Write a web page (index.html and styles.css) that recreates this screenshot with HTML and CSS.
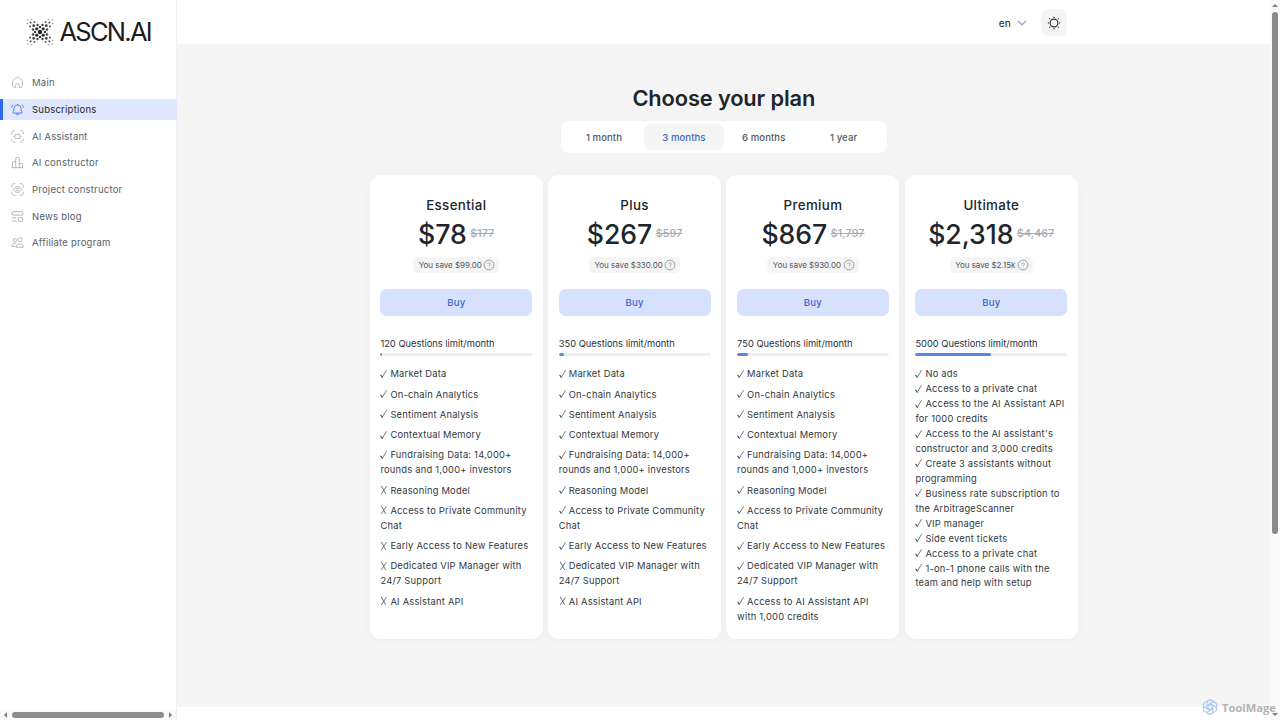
FILE: index.html
```html
<!DOCTYPE html>
<html lang="en">
<head>
<meta charset="utf-8">
<title>ASCN.AI – Subscriptions</title>
<link rel="stylesheet" href="styles.css">
</head>
<body>
<svg class="defs" width="0" height="0" aria-hidden="true">
  <symbol id="ok" viewBox="0 0 8 10"><path d="M.7 6 2.200 8.500 6.600 1.200" fill="none" stroke="#4a525a" stroke-width=".75"/><path d="M.7 5.800 2.300 8.400" stroke="#404850" stroke-width="1"/></symbol>
  <symbol id="no" viewBox="0 0 8 10"><path d="M1.700 1.400 5.600 8.900M6.500 1.200 1.300 8.900M1 1.600h1" fill="none" stroke="#4a525a" stroke-width=".8"/></symbol>
  <symbol id="help" viewBox="0 0 12 12"><circle cx="6" cy="6" r="4.900" fill="none" stroke="#929aa3" stroke-width=".9"/><path d="M4.700 5.100c0-1.800 2.700-1.700 2.700-.1 0 1-1.300 1-1.300 2M6.100 7.800v.7" fill="none" stroke="#929aa3" stroke-width=".8"/></symbol>
</svg>
<div class="app">
  <aside class="sidebar">
    <div class="logo">
      <svg class="logo-mark" viewBox="0 0 28 28" fill="#222">
        <circle cx="14" cy="14" r="2.200"/>
        <g fill="#333"><circle cx="10.800" cy="10.800" r="1.600"/><circle cx="17.200" cy="10.800" r="1.600"/><circle cx="10.800" cy="17.200" r="1.600"/><circle cx="17.200" cy="17.200" r="1.600"/><circle cx="14" cy="9" r="1.200"/><circle cx="14" cy="19" r="1.200"/><circle cx="9" cy="14" r="1.200"/><circle cx="19" cy="14" r="1.200"/></g>
        <g fill="#444"><circle cx="7.700" cy="7.700" r="1.400"/><circle cx="20.300" cy="7.700" r="1.400"/><circle cx="7.700" cy="20.300" r="1.400"/><circle cx="20.300" cy="20.300" r="1.400"/><circle cx="7" cy="11.500" r="1.200"/><circle cx="21" cy="11.500" r="1.200"/><circle cx="7" cy="16.500" r="1.200"/><circle cx="21" cy="16.500" r="1.200"/><circle cx="11.500" cy="7" r="1.200"/><circle cx="16.500" cy="7" r="1.200"/><circle cx="11.500" cy="21" r="1.200"/><circle cx="16.500" cy="21" r="1.200"/></g>
        <g fill="#666"><circle cx="4.600" cy="4.600" r="1.100"/><circle cx="23.400" cy="4.600" r="1.100"/><circle cx="4.600" cy="23.400" r="1.100"/><circle cx="23.400" cy="23.400" r="1.100"/><circle cx="4" cy="8.500" r="1"/><circle cx="24" cy="8.500" r="1"/><circle cx="4" cy="19.500" r="1"/><circle cx="24" cy="19.500" r="1"/><circle cx="8.500" cy="4" r="1"/><circle cx="19.500" cy="4" r="1"/><circle cx="8.500" cy="24" r="1"/><circle cx="19.500" cy="24" r="1"/></g>
        <g fill="#999"><circle cx="1.500" cy="1.800" r=".7"/><circle cx="26.500" cy="1.800" r=".7"/><circle cx="1.500" cy="26.200" r=".7"/><circle cx="26.500" cy="26.200" r=".7"/><circle cx="1.300" cy="5.500" r=".8"/><circle cx="26.700" cy="5.500" r=".8"/><circle cx="1.300" cy="22.500" r=".8"/><circle cx="26.700" cy="22.500" r=".8"/><circle cx="5.500" cy="1.300" r=".8"/><circle cx="22.500" cy="1.300" r=".8"/><circle cx="5.500" cy="26.700" r=".8"/><circle cx="22.500" cy="26.700" r=".8"/></g>
      </svg>
      <span class="logo-text">ASCN.AI</span>
    </div>
    <nav class="nav">
      <a class="nav-item"><svg class="nav-icon" viewBox="0 0 14 14"><path d="M1.700 6c0-.9.2-1.300.9-1.900L5.700 1.800c.9-.6 1.700-.6 2.600 0l3.100 2.300c.7.6.9 1 .9 1.900v4.200c0 1.400-.7 2.200-2.100 2.200H9V10c0-2.400-4-2.400-4 0v2.400H3.800c-1.400 0-2.100-.8-2.100-2.200z"/></svg><span>Main</span></a>
      <a class="nav-item active"><svg class="nav-icon" viewBox="0 0 14 14"><path d="M2.500 10.800h9c.6 0 .8-.6.400-1-.7-.8-1-1.300-1-2.300V5.800c0-4.800-7.800-4.800-7.800 0v1.700c0 1-.3 1.500-1 2.300-.4.400-.2 1 .4 1zM5.300 11c.2 2.300 3.200 2.300 3.400 0M7 2.200V.9M2.500 1.600C1.300 2.500.9 3.500.8 5M11.500 1.600c1.200.9 1.600 1.900 1.700 3.400"/></svg><span>Subscriptions</span></a>
      <a class="nav-item"><svg class="nav-icon" viewBox="0 0 14 14"><path d="M.7 4.700V3.500C.7 2 2 .7 3.500.7h1.200M9.300.7h1.200C12 .7 13.300 2 13.300 3.500v1.200M13.300 9.300v1.200c0 1.500-1.300 2.800-2.800 2.800H9.300M4.700 13.300H3.500C2 13.300.7 12 .7 10.500V9.300M5.600 4.900h2.800c1 0 1.600.6 1.600 1.600v1.100c0 1-.6 1.600-1.600 1.600H5.600C4.600 9.200 4 8.600 4 7.600V6.500c0-1 .6-1.600 1.600-1.600zM7 4.800V3.800M3.300 6.500v1.300M10.700 6.500v1.300"/></svg><span>AI Assistant</span></a>
      <a class="nav-item"><svg class="nav-icon" viewBox="0 0 14 14"><path d="M.8 12.600h12.400M1.600 12.600V7c0-.8.3-1.100 1-1.100h2.500M5.100 12.600V2.800c0-1 .4-1.400 1.200-1.400h1.400c.8 0 1.200.4 1.200 1.400v9.800M8.900 8h2.500c.7 0 1 .3 1 1.100v3.500"/></svg><span>AI constructor</span></a>
      <a class="nav-item"><svg class="nav-icon" viewBox="0 0 14 14"><path d="M.7 4.700V3.500C.7 2 2 .7 3.500.7h1.200M9.300.7h1.200C12 .7 13.300 2 13.300 3.500v1.200M13.300 9.300v1.200c0 1.500-1.300 2.800-2.800 2.800H9.300M4.700 13.300H3.500C2 13.300.7 12 .7 10.500V9.300M2.500 7c2.300-4.300 6.700-4.300 9 0-2.300 4.300-6.700 4.300-9 0z"/><circle cx="7" cy="7" r="1.600"/></svg><span>Project constructor</span></a>
      <a class="nav-item"><svg class="nav-icon" viewBox="0 0 14 14"><rect x="1.300" y="1.800" width="11.400" height="3.700" rx=".8"/><rect x="8" y="8.200" width="4.400" height="4" rx=".7"/><path d="M1.200 8.400H6M1.200 11.900H6"/></svg><span>News blog</span></a>
      <a class="nav-item"><svg class="nav-icon" viewBox="0 0 14 14"><circle cx="4.200" cy="4.500" r="1.800"/><circle cx="9.800" cy="4" r="2.200"/><path d="M5.800 12.100c-.4-4.900 7.900-4.900 7.500 0zM1 11.300c-.2-2 .8-3.100 2.500-3.200h1.700M1 11.300h3.600"/></svg><span>Affiliate program</span></a>
    </nav>
    <div class="hbar"><i class="tri-l"></i><i class="hthumb"></i><i class="tri-r"></i></div>
  </aside>
  <div class="page">
    <header class="header">
      <span class="lang">en</span>
      <svg class="chev" viewBox="0 0 10 6"><path d="M1 .9 5 4.900 9 .9" fill="none" stroke="#8f99a3" stroke-width="1.200"/></svg>
      <button class="theme"><svg viewBox="0 0 14 14" fill="none" stroke="#30373d" stroke-width="1.200"><circle cx="7" cy="7" r="3.900"/><path d="M7 .8v1.200M7 12v1.200M.8 7H2M12 7h1.200M2.300 2.300l.8.8M10.900 10.900l.8.800M2.300 11.700l.8-.8M10.900 3.100l.8-.8"/></svg></button>
    </header>
    <main class="content">
      <h1 class="title">Choose your plan</h1>
      <div class="tabs"><span class="tab">1 month</span><span class="tab on">3 months</span><span class="tab">6 months</span><span class="tab">1 year</span></div>
      <div class="cards">
        <section class="card">
          <h2 class="name">Essential</h2>
          <div class="price"><b>$78</b><s>$177</s></div>
          <div class="save"><span>You save $99.00</span><svg><use href="#help"/></svg></div>
          <button class="buy">Buy</button>
          <div class="limit">120 Questions limit/month</div>
          <div class="bar"><i style="width:1.2%"></i></div>
          <ul class="list">
            <li><svg><use href="#ok"/></svg>Market Data</li>
            <li><svg><use href="#ok"/></svg>On-chain Analytics</li>
            <li><svg><use href="#ok"/></svg>Sentiment Analysis</li>
            <li><svg><use href="#ok"/></svg>Contextual Memory</li>
            <li><svg><use href="#ok"/></svg>Fundraising Data: 14,000+<br>rounds and 1,000+ investors</li>
            <li><svg><use href="#no"/></svg>Reasoning Model</li>
            <li><svg><use href="#no"/></svg>Access to Private Community<br>Chat</li>
            <li><svg><use href="#no"/></svg>Early Access to New Features</li>
            <li><svg><use href="#no"/></svg>Dedicated VIP Manager with<br>24/7 Support</li>
            <li><svg><use href="#no"/></svg>AI Assistant API</li>
          </ul>
        </section>
        <section class="card">
          <h2 class="name">Plus</h2>
          <div class="price"><b>$267</b><s>$597</s></div>
          <div class="save"><span>You save $330.00</span><svg><use href="#help"/></svg></div>
          <button class="buy">Buy</button>
          <div class="limit">350 Questions limit/month</div>
          <div class="bar"><i style="width:3.5%"></i></div>
          <ul class="list">
            <li><svg><use href="#ok"/></svg>Market Data</li>
            <li><svg><use href="#ok"/></svg>On-chain Analytics</li>
            <li><svg><use href="#ok"/></svg>Sentiment Analysis</li>
            <li><svg><use href="#ok"/></svg>Contextual Memory</li>
            <li><svg><use href="#ok"/></svg>Fundraising Data: 14,000+<br>rounds and 1,000+ investors</li>
            <li><svg><use href="#ok"/></svg>Reasoning Model</li>
            <li><svg><use href="#ok"/></svg>Access to Private Community<br>Chat</li>
            <li><svg><use href="#ok"/></svg>Early Access to New Features</li>
            <li><svg><use href="#no"/></svg>Dedicated VIP Manager with<br>24/7 Support</li>
            <li><svg><use href="#no"/></svg>AI Assistant API</li>
          </ul>
        </section>
        <section class="card">
          <h2 class="name">Premium</h2>
          <div class="price"><b>$867</b><s>$1,797</s></div>
          <div class="save"><span>You save $930.00</span><svg><use href="#help"/></svg></div>
          <button class="buy">Buy</button>
          <div class="limit">750 Questions limit/month</div>
          <div class="bar"><i style="width:7.5%"></i></div>
          <ul class="list">
            <li><svg><use href="#ok"/></svg>Market Data</li>
            <li><svg><use href="#ok"/></svg>On-chain Analytics</li>
            <li><svg><use href="#ok"/></svg>Sentiment Analysis</li>
            <li><svg><use href="#ok"/></svg>Contextual Memory</li>
            <li><svg><use href="#ok"/></svg>Fundraising Data: 14,000+<br>rounds and 1,000+ investors</li>
            <li><svg><use href="#ok"/></svg>Reasoning Model</li>
            <li><svg><use href="#ok"/></svg>Access to Private Community<br>Chat</li>
            <li><svg><use href="#ok"/></svg>Early Access to New Features</li>
            <li><svg><use href="#ok"/></svg>Dedicated VIP Manager with<br>24/7 Support</li>
            <li><svg><use href="#ok"/></svg>Access to AI Assistant API<br>with 1,000 credits</li>
          </ul>
        </section>
        <section class="card">
          <h2 class="name">Ultimate</h2>
          <div class="price"><b>$2,318</b><s>$4,467</s></div>
          <div class="save"><span>You save $2.15k</span><svg><use href="#help"/></svg></div>
          <button class="buy">Buy</button>
          <div class="limit">5000 Questions limit/month</div>
          <div class="bar"><i style="width:50%"></i></div>
          <ul class="list tight">
            <li><svg><use href="#ok"/></svg>No ads</li>
            <li><svg><use href="#ok"/></svg>Access to a private chat</li>
            <li><svg><use href="#ok"/></svg>Access to the AI Assistant API<br>for 1000 credits</li>
            <li><svg><use href="#ok"/></svg>Access to the AI assistant's<br>constructor and 3,000 credits</li>
            <li><svg><use href="#ok"/></svg>Create 3 assistants without<br>programming</li>
            <li><svg><use href="#ok"/></svg>Business rate subscription to<br>the ArbitrageScanner</li>
            <li><svg><use href="#ok"/></svg>VIP manager</li>
            <li><svg><use href="#ok"/></svg>Side event tickets</li>
            <li><svg><use href="#ok"/></svg>Access to a private chat</li>
            <li><svg><use href="#ok"/></svg>1-on-1 phone calls with the<br>team and help with setup</li>
          </ul>
        </section>
      </div>
    </main>
  </div>
  <div class="vbar"><i class="tri-u"></i><i class="vthumb"></i><i class="tri-d"></i></div>
</div>
<div class="mark">
  <svg viewBox="0 0 16 16" fill="none" stroke="#a9c4f2" stroke-width="1.100"><path id="petal" d="M5 3.800C5.200.5 9.500-.2 11.200 2.600M5 3.800v4.800l3 1.800"/><use href="#petal" transform="rotate(60 8 8)"/><use href="#petal" transform="rotate(120 8 8)"/><use href="#petal" transform="rotate(180 8 8)"/><use href="#petal" transform="rotate(240 8 8)"/><use href="#petal" transform="rotate(300 8 8)"/></svg>
  <span>ToolMage</span>
</div>
</body>
</html>
```

FILE: styles.css
```css
* { box-sizing: border-box; }
body { margin: 0; width: 1280px; height: 720px; overflow: hidden; background: #fff; color: #1d252d; font-family: Inter, "Liberation Sans", sans-serif; white-space: nowrap; }
.defs { position: absolute; }
.app { display: flex; height: 720px; }

.sidebar { width: 177px; border-right: 1px solid #f1f1f1; display: flex; flex-direction: column; }
.logo { display: flex; align-items: center; height: 64px; padding-left: 25.500px; gap: 6px; }
.logo-mark { width: 28px; height: 28px; }
.logo-text { font-size: 25.500px; line-height: 30px; letter-spacing: -1.750px; color: #1c1c1c; }
.nav { display: flex; flex-direction: column; gap: 5.340px; padding-top: 8.300px; }
.nav-item { display: flex; align-items: center; height: 21.330px; padding-left: 11px; gap: 8px; font-size: 9.500px; letter-spacing: .23px; color: #56616a; }
.nav-icon { width: 13px; height: 13px; fill: none; stroke: #a4abb3; stroke-width: .9; }
.active { background: #dfe8fe; color: #1d252d; padding-left: 8px; border-left: 3px solid #2f6bee; margin-right: -1px; }
.active .nav-icon { stroke: #3f71d8; }
.hbar { margin-top: auto; height: 10px; display: flex; align-items: center; justify-content: space-between; padding: 0 4px; background: #fafafa; }
.hthumb { width: 152px; height: 6px; border-radius: 3px; background: #8b8b8b; }
.tri-l, .tri-r { border: 3px solid transparent; }
.tri-l { border-left: 0; border-right: 3px solid #7d7d7d; }
.tri-r { border-right: 0; border-left: 3px solid #7d7d7d; }

.page { width: 1093px; display: flex; flex-direction: column; }
.header { height: 44px; display: flex; align-items: center; justify-content: flex-end; padding: 1px 202.600px 0 0; }
.lang { font-size: 10px; font-weight: 500; color: #343c44; letter-spacing: .1px; }
.chev { width: 10px; height: 6px; margin: 1px 14px 0 6px; }
.theme { width: 26.600px; height: 26.600px; border: 0; border-radius: 7px; background: #f5f5f5; display: grid; place-items: center; padding: 0; }
.theme svg { width: 14px; height: 14px; }
.content { height: 663px; background: #f5f5f5; display: flex; flex-direction: column; align-items: center; padding: 39px 0 0 .6px; }
.title { margin: 0; font-size: 21.800px; line-height: 30px; font-weight: 600; letter-spacing: -.12px; }
.tabs { display: flex; width: 325.500px; height: 32px; margin-top: 8.400px; padding: 3px; background: #fff; border-radius: 8px; }
.tab { flex: 1; display: grid; place-items: center; border-radius: 8px; font-size: 9.600px; font-weight: 500; color: #525c65; letter-spacing: .05px; }
.on { background: #f5f5f5; color: #3e68c5; }

.cards { display: grid; grid-template-columns: repeat(4, 173px); gap: 5.340px; margin-top: 21.600px; height: 464px; }
.card { background: #fff; border-radius: 11px; padding: 20px 10.600px 0; display: flex; flex-direction: column; align-items: center; box-shadow: 0 2px 10px rgba(0,0,0,.03); }
.name { margin: 0; font-size: 13.330px; line-height: 20px; font-weight: 500; letter-spacing: .35px; }
.price { display: flex; align-items: center; height: 38px; gap: 3.500px; }
.price b { font-size: 26.670px; font-weight: 500; letter-spacing: -.05px; }
.price s { font-size: 10.670px; font-weight: 500; color: #a5abb2; letter-spacing: .15px; }
.save { display: flex; align-items: center; gap: 1.500px; height: 15.500px; padding: 0 4px 0 5.500px; margin-top: 4.500px; border-radius: 5px; background: #f5f5f5; font-size: 8px; color: #4d565e; letter-spacing: -.02px; }
.save svg { width: 12px; height: 12px; }
.buy { width: 100%; height: 26.700px; margin-top: 16.500px; border: 0; border-radius: 7px; background: #d6e1fd; color: #3e68c5; font: 500 9.600px Inter, sans-serif; letter-spacing: .2px; }
.limit { align-self: flex-start; font-size: 9.330px; line-height: 14px; margin-top: 21px; color: #293139; }
.bar { width: 100%; height: 3px; margin-top: 2.300px; border-radius: 2px; background: #eee; overflow: hidden; }
.bar i { display: block; height: 100%; border-radius: 2px; background: #5887db; }
.list { align-self: stretch; list-style: none; margin: 10.900px 0 0; padding: 0; display: flex; flex-direction: column; gap: 5.330px; font-size: 9.330px; line-height: 14.930px; letter-spacing: .23px; color: #303840; }
.list svg { width: 8px; height: 10px; margin-right: 2px; vertical-align: -1.500px; }
.tight { gap: 0; }

.vbar { width: 10px; background: #fafafa; display: flex; flex-direction: column; align-items: center; padding: 4px 0; }
.vthumb { width: 6px; height: 522px; margin-top: 5px; border-radius: 3px; background: #8b8b8b; }
.tri-u, .tri-d { border: 3px solid transparent; }
.tri-u { border-top: 0; border-bottom: 3px solid #7d7d7d; }
.tri-d { border-bottom: 0; border-top: 3px solid #7d7d7d; margin-top: auto; }
.mark { position: absolute; left: 1202px; top: 699px; display: flex; align-items: center; gap: 4px; font: 700 11.200px "Open Sans", sans-serif; color: #b3b3b3; }
.mark svg { width: 16px; height: 16px; }
```
